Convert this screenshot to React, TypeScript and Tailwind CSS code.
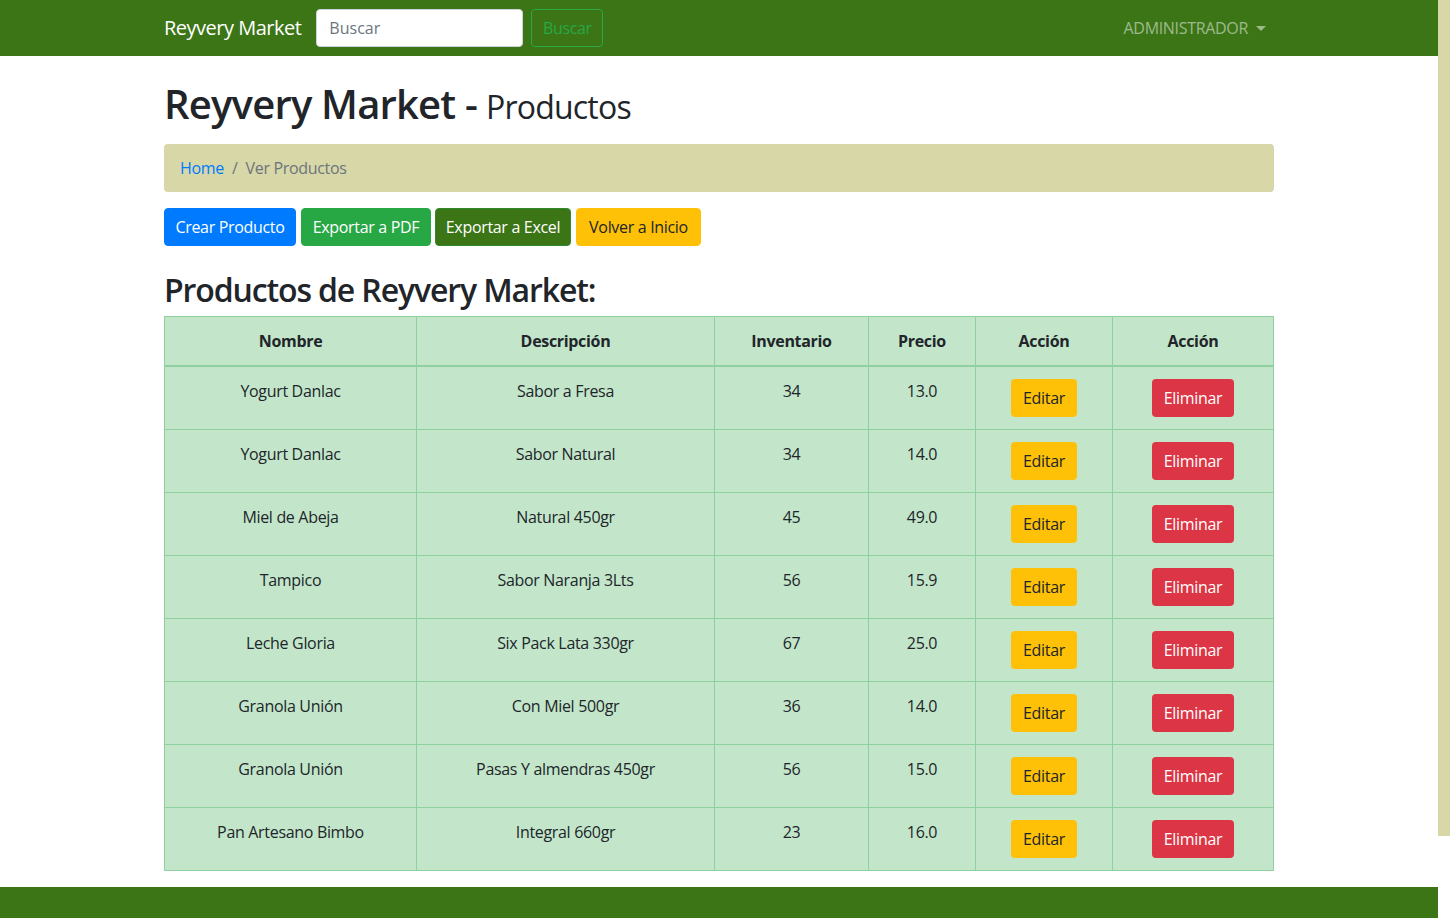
import React from "react";

const rows = [
  ["Yogurt Danlac", "Sabor a Fresa", "34", "13.0"],
  ["Yogurt Danlac", "Sabor Natural", "34", "14.0"],
  ["Miel de Abeja", "Natural 450gr", "45", "49.0"],
  ["Tampico", "Sabor Naranja 3Lts", "56", "15.9"],
  ["Leche Gloria", "Six Pack Lata 330gr", "67", "25.0"],
  ["Granola Unión", "Con Miel 500gr", "36", "14.0"],
  ["Granola Unión", "Pasas Y almendras 450gr", "56", "15.0"],
  ["Pan Artesano Bimbo", "Integral 660gr", "23", "16.0"],
];

export default function App() {
  return (
    <div className="flex h-[918px] w-[1450px] overflow-hidden bg-white font-['Open_Sans','Noto_Sans',sans-serif] text-[16px] text-[#212529]">
      <div className="flex h-[918px] w-[1438px] flex-col overflow-hidden">
        {/* Navbar */}
        <nav className="h-[56px] shrink-0 bg-[#3b7516]">
          <div className="mx-auto flex h-full w-[1110px] items-center">
            <span className="mr-[15px] text-[20px] leading-[30px] tracking-[-0.025em] text-white">Reyvery Market</span>
            <div className="flex items-center">
              <input
                className="h-[38px] w-[207px] rounded-[4px] border border-[#ced4da] bg-white px-[12px] text-[16px] text-[#495057] placeholder:text-[#6c757d] outline-none"
                placeholder="Buscar"
              />
              <button className="ml-[8px] h-[38px] w-[72px] rounded-[4px] border border-[#28a745] text-[16px] tracking-[-0.02em] text-[#28a745]">
                Buscar
              </button>
            </div>
            <div className="ml-auto flex items-center pr-[8px] text-[16px] tracking-[-0.02em] text-white/50">
              ADMINISTRADOR
              <span className="ml-[8px] mt-[1px] h-0 w-0 border-x-[5px] border-t-[5px] border-x-transparent border-t-white/50" />
            </div>
          </div>
        </nav>

        {/* Content */}
        <div className="mx-auto w-[1110px]">
          <h1 className="mt-[24px] mb-[16px] flex h-[48px] items-baseline text-[40px] font-semibold leading-[48px] tracking-[-0.02em]">
            <span>Reyvery Market -</span>
            <span className="ml-[9px] text-[32px] font-normal">Productos</span>
          </h1>

          <div className="mb-[16px] flex h-[48px] items-center rounded-[4px] bg-[#d8d7a8] px-[16px] text-[16px] tracking-[-0.02em]">
            <span className="text-[#007bff]">Home</span>
            <span className="px-[8px] text-[#6c757d]">/</span>
            <span className="text-[#6c757d]">Ver Productos</span>
          </div>

          <div className="flex gap-[4px] tracking-[-0.02em]">
            <button className="h-[38px] w-[132px] rounded-[4px] border border-[#007bff] bg-[#007bff] text-white">Crear Producto</button>
            <button className="ml-[1px] h-[38px] w-[130px] rounded-[4px] border border-[#28a745] bg-[#28a745] text-white">Exportar a PDF</button>
            <button className="h-[38px] w-[136px] rounded-[4px] border border-[#2f8a2f] bg-[#3b7516] text-white">Exportar a Excel</button>
            <button className="ml-[1px] h-[38px] w-[125px] rounded-[4px] border border-[#ffc107] bg-[#ffc107] text-[#212529]">Volver a Inicio</button>
          </div>

          <h2 className="mt-[25px] mb-[7px] h-[38px] text-[32px] font-semibold leading-[38px] tracking-[-0.035em]">
            Productos de Reyvery Market:
          </h2>

          <table className="w-[1109px] table-fixed border-collapse border border-[#8fd19e] bg-[#c3e6cb] text-center tracking-[-0.02em]">
            <colgroup>
              <col className="w-[252px]" />
              <col className="w-[298px]" />
              <col className="w-[154px]" />
              <col className="w-[107px]" />
              <col className="w-[137px]" />
              <col className="w-[161px]" />
            </colgroup>
            <thead>
              <tr>
                {["Nombre", "Descripción", "Inventario", "Precio", "Acción", "Acción"].map((h, i) => (
                  <th key={i} className="border border-b-2 border-[#8fd19e] p-[12px] align-bottom font-bold leading-[24px]">
                    {h}
                  </th>
                ))}
              </tr>
            </thead>
            <tbody>
              {rows.map((r, i) => (
                <tr key={i}>
                  {r.map((c, j) => (
                    <td key={j} className="border border-[#8fd19e] p-[12px] align-top leading-[24px]">
                      {c}
                    </td>
                  ))}
                  <td className="border border-[#8fd19e] p-[12px] align-top leading-[24px]">
                    <button className="h-[38px] w-[66px] rounded-[4px] bg-[#ffc107] text-[#212529]">Editar</button>
                  </td>
                  <td className="border border-[#8fd19e] p-[12px] align-top leading-[24px]">
                    <button className="h-[38px] w-[82px] rounded-[4px] bg-[#dc3545] text-white">Eliminar</button>
                  </td>
                </tr>
              ))}
            </tbody>
          </table>
        </div>

        <footer className="mt-[16px] h-[200px] shrink-0 bg-[#3b7516]" />
      </div>

      {/* Scrollbar */}
      <div className="flex w-[12px] flex-col bg-white">
        <div className="h-[836px] bg-[#d8d7a8]" />
      </div>
    </div>
  );
}
